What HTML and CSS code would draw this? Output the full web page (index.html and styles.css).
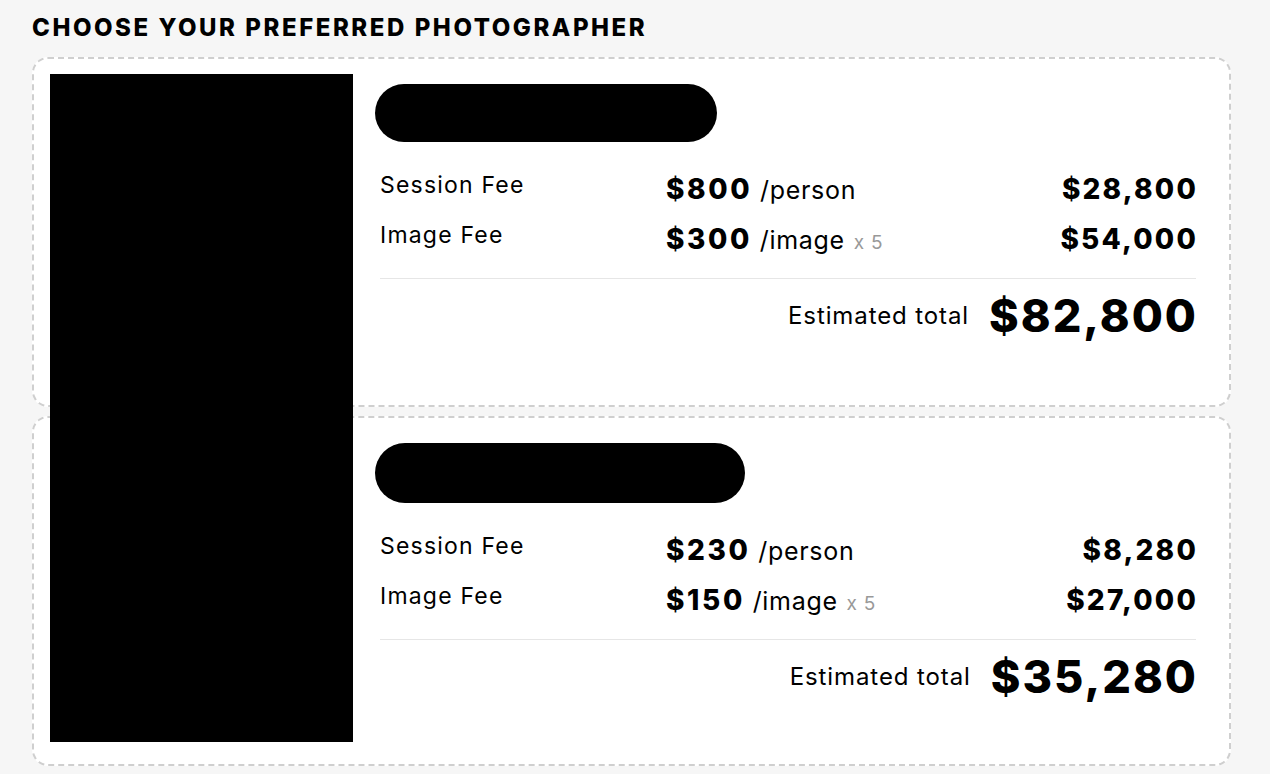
FILE: index.html
```html
<!DOCTYPE html>
<html lang="en">
<head>
<meta charset="utf-8">
<title>Choose your preferred photographer</title>
<link rel="stylesheet" href="styles.css">
</head>
<body>
<main class="page">
  <h1 class="title">CHOOSE YOUR PREFERRED PHOTOGRAPHER</h1>
  <div class="list">
    <div class="redaction"></div>
    <section class="card">
      <div class="media"></div>
      <div class="info">
        <div class="name name-1"></div>
        <div class="fees">
          <div class="row">
            <span class="label">Session Fee</span>
            <span class="price"><b>$800</b> <span class="unit">/person</span></span>
            <span class="amount">$28,800</span>
          </div>
          <div class="row">
            <span class="label">Image Fee</span>
            <span class="price"><b>$300</b> <span class="unit">/image</span> <span class="qty">x 5</span></span>
            <span class="amount">$54,000</span>
          </div>
        </div>
        <div class="total">
          <span class="total-label">Estimated total</span>
          <span class="total-value">$82,800</span>
        </div>
      </div>
    </section>
    <section class="card">
      <div class="media"></div>
      <div class="info">
        <div class="name name-2"></div>
        <div class="fees">
          <div class="row">
            <span class="label">Session Fee</span>
            <span class="price"><b>$230</b> <span class="unit">/person</span></span>
            <span class="amount">$8,280</span>
          </div>
          <div class="row">
            <span class="label">Image Fee</span>
            <span class="price"><b>$150</b> <span class="unit">/image</span> <span class="qty">x 5</span></span>
            <span class="amount">$27,000</span>
          </div>
        </div>
        <div class="total">
          <span class="total-label">Estimated total</span>
          <span class="total-value">$35,280</span>
        </div>
      </div>
    </section>
  </div>
</main>
</body>
</html>
```

FILE: styles.css
```css
* { box-sizing: border-box; }

html, body {
  margin: 0;
  padding: 0;
  background: #f6f6f6;
}

body {
  font-family: "Inter", "Liberation Sans", sans-serif;
  color: #000;
}

.page {
  padding: 14px 39px 0 32px;
}

.title {
  margin: 0 0 15px 0;
  font-size: 24px;
  line-height: 28px;
  font-weight: 800;
  letter-spacing: 2.55px;
}

.list {
  position: relative;
  display: flex;
  flex-direction: column;
  gap: 9px;
}

.redaction {
  position: absolute;
  left: 18px;
  top: 17px;
  width: 303px;
  height: 668px;
  background: #000;
}

.card {
  display: flex;
  gap: 22px;
  background: #fff;
  border: 2px dashed #cfcfcf;
  border-radius: 16px;
  padding: 15px 33px 15px 16px;
}

.media {
  width: 303px;
  height: 316px;
  flex: none;
}

.info {
  flex: 1;
  display: flex;
  flex-direction: column;
  padding-top: 10px;
}

.name {
  height: 58px;
  background: #000;
  border-radius: 29px;
}

.name-1 { width: 342px; }
.name-2 { width: 370px; height: 60px; border-radius: 30px; }

.fees {
  margin: 30px 0 0 5px;
  padding-bottom: 18px;
  border-bottom: 1.5px solid #e6e6e6;
  display: flex;
  flex-direction: column;
  gap: 12px;
}

.row {
  display: flex;
  align-items: baseline;
  height: 38px;
}

.label {
  width: 286px;
  font-size: 23px;
  letter-spacing: 1.2px;
  position: relative;
  top: -6px;
}

.price {
  flex: 1;
  font-size: 24px;
}

.price b {
  font-weight: 800;
  font-size: 28px;
  letter-spacing: 2.6px;
  margin-right: 1px;
}

.unit {
  font-weight: 400;
  font-size: 25px;
  letter-spacing: 0.7px;
}

.qty {
  color: #999;
  font-size: 19px;
  letter-spacing: 0.8px;
  margin-left: 2px;
}

.amount {
  font-weight: 800;
  font-size: 28px;
  letter-spacing: 2.2px;
  margin-right: -2px;
}

.total {
  display: flex;
  justify-content: flex-end;
  align-items: center;
  gap: 20px;
  margin-top: 9px;
}

.total-label {
  font-size: 24px;
  letter-spacing: 0.9px;
}

.total-value {
  font-size: 45px;
  font-weight: 800;
  letter-spacing: 2px;
  margin-right: -2px;
}
```
